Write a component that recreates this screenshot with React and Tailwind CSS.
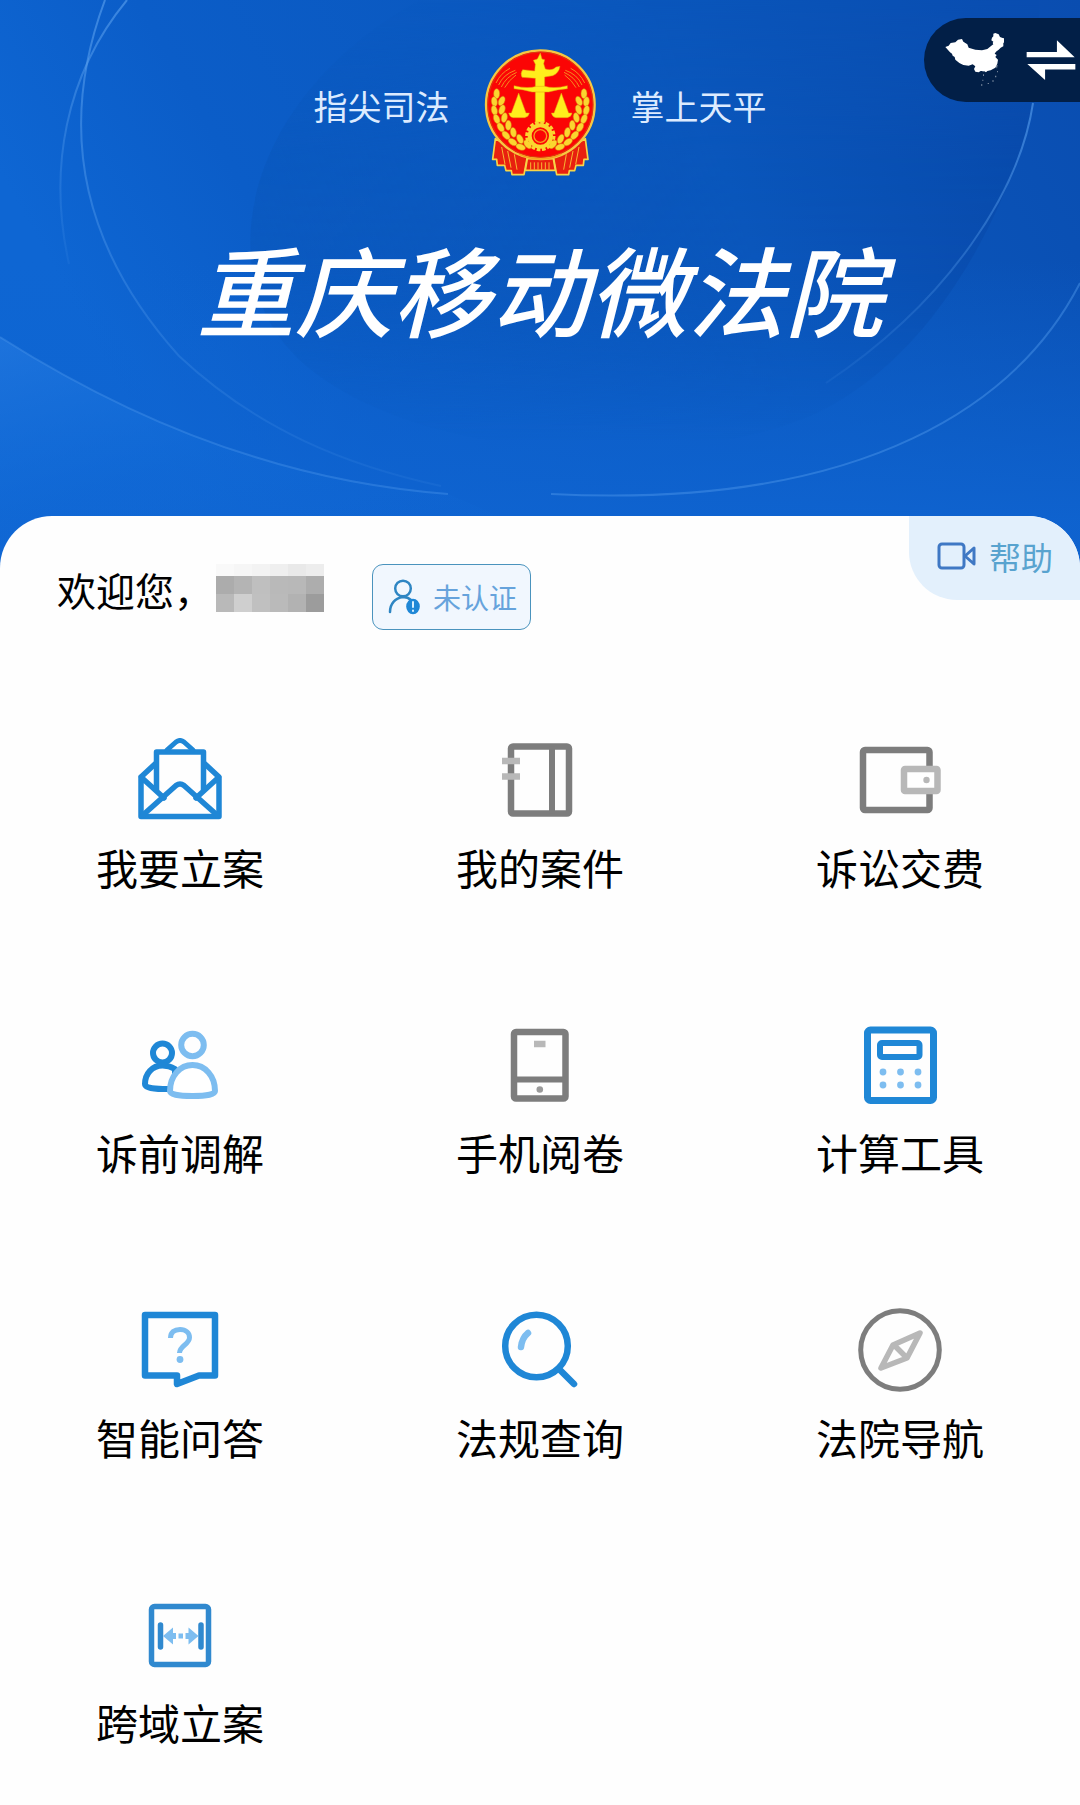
const BLUE = '#1f87d6';
const SKY = '#7dbdf0';
const GRAY = '#7d7d7d';
const SILVER = '#b8b8b8';

const icons = {
  envelope: (
    <g stroke={BLUE} strokeWidth="5.500" strokeLinejoin="round" strokeLinecap="round">
      <path d="M3 39v39.500h78V39L67 26M17 26L3 39l23 21M81 39L58 60" />
      <path d="M18.500 52V14h47v38" strokeLinecap="butt" />
      <path d="M29 12l9-8q4-3 8 0l9 8" strokeWidth="5" />
      <path d="M5 77l33-29.500q4-3 8 0L79 77" />
    </g>
  ),
  notebook: (
    <g strokeWidth="6.500" strokeLinejoin="round">
      <rect x="13" y="8.500" width="58" height="67" rx="2" stroke={GRAY} />
      <path d="M54 8.500v67" stroke={GRAY} strokeWidth="6" />
      <path d="M4 23h18M4 38.500h18" stroke={SILVER} strokeWidth="6.500" />
    </g>
  ),
  wallet: (
    <g strokeWidth="6.500">
      <rect x="5" y="12" width="66.500" height="60" rx="2" stroke={GRAY} />
      <rect x="46" y="31" width="33.500" height="22" rx="1" stroke={SILVER} fill="#fff" />
      <circle cx="68.500" cy="42" r="3.200" fill={SILVER} />
    </g>
  ),
  people: (
    <g strokeWidth="6" strokeLinejoin="round">
      <circle cx="24.500" cy="30" r="9.500" stroke={BLUE} />
      <path d="M24.500 42.500C14 42.500 7 51 7 61q0 5 18 5h12V46q-6-3.500-12.500-3.500z" stroke={BLUE} />
      <circle cx="54.500" cy="22" r="11.300" stroke={SKY} />
      <path d="M54.500 42C42 42 32 53 32 68q0 5 22.500 5T77 68C77 53 67 42 54.500 42z" stroke={SKY} fill="#fff" />
    </g>
  ),
  phone: (
    <g strokeWidth="6.500">
      <rect x="16" y="9" width="51.500" height="66.500" rx="2" stroke={GRAY} />
      <path d="M16 56.500h51" stroke={GRAY} strokeWidth="6" />
      <path d="M36 21h11.500" stroke={SILVER} />
      <circle cx="41.800" cy="66.500" r="3.300" fill="#9a9a9a" />
    </g>
  ),
  calculator: (
    <g stroke={BLUE} strokeWidth="7">
      <rect x="9.500" y="7" width="66" height="70.500" rx="3" />
      <rect x="22" y="20" width="39.500" height="14" rx="2" strokeWidth="6" />
      <g fill={SKY} stroke="none">
        <circle cx="25" cy="49" r="3.400" />
        <circle cx="42.500" cy="49" r="3.400" />
        <circle cx="60" cy="49" r="3.400" />
        <circle cx="25" cy="62" r="3.400" />
        <circle cx="42.500" cy="62" r="3.400" />
        <circle cx="60" cy="62" r="3.400" />
      </g>
    </g>
  ),
  question: (
    <g strokeLinejoin="round">
      <path d="M7 7h70v60.500H61L39 76v-8.500H7z" stroke={BLUE} strokeWidth="6.500" />
      <path d="M32.500 30c0-6 4-8.500 9.500-8.500 6 0 9.500 3.500 9.500 8 0 7-10 8-10 15.500" stroke={SKY} strokeWidth="5" />
      <circle cx="42" cy="51.500" r="3.400" fill={SKY} />
    </g>
  ),
  search: (
    <g strokeWidth="6.500" strokeLinecap="round">
      <circle cx="38.500" cy="38" r="31.300" stroke={BLUE} />
      <path d="M61 61l15 15" stroke={BLUE} />
      <path d="M23 39q1-9 7-14" stroke={SKY} />
    </g>
  ),
  compass: (
    <g strokeLinejoin="round" strokeLinecap="round">
      <circle cx="42" cy="42" r="39.300" stroke={GRAY} strokeWidth="5" />
      <path d="M62 25L35 37 23 60l26-10zM36 37l12 12" stroke={SILVER} strokeWidth="5.500" />
    </g>
  ),
  crossRegion: (
    <g>
      <rect x="13.500" y="13.500" width="57" height="58" rx="3" stroke="#3089cf" strokeWidth="5.500" />
      <path d="M22.500 32v22M63 32v22" stroke="#3089cf" strokeWidth="5.500" strokeLinecap="round" />
      <path d="M25 43l10-8.500v5.500h3v6h-3v5.500zM60.500 43l-10-8.500v5.500h-3v6h3v5.500z" fill={SKY} />
      <path d="M40.500 43h4.500" stroke={SKY} strokeWidth="5" />
    </g>
  ),
};

const services = [
  { name: '我要立案', icon: 'envelope' },
  { name: '我的案件', icon: 'notebook' },
  { name: '诉讼交费', icon: 'wallet' },
  { name: '诉前调解', icon: 'people' },
  { name: '手机阅卷', icon: 'phone' },
  { name: '计算工具', icon: 'calculator' },
  { name: '智能问答', icon: 'question' },
  { name: '法规查询', icon: 'search' },
  { name: '法院导航', icon: 'compass' },
  { name: '跨域立案', icon: 'crossRegion' },
];

// [x, y, rotation] for the ears of wheat on the left half of the emblem
const grains = [
  [110, 190, 0], [103, 214, -8], [125, 212, 25], [103, 240, -14], [126, 238, 20],
  [110, 266, -22], [133, 262, 12], [122, 291, -32], [145, 285, 2], [138, 315, -42],
  [160, 306, -10], [158, 335, -55], [180, 326, -25], [182, 350, -68], [203, 342, -40],
];

function Emblem() {
  return (
    <svg viewBox="72 50 339 390" className="h-[130px] w-[113px]" fill="none" aria-hidden="true">
      <g fill="#e8200f" stroke="#f7d548" strokeWidth="5" strokeLinejoin="round">
        <path d="M106 325l-8 62h12l2 18h22l4 16h16l2 12h36l10-54zM376 325l8 62h-12l-2 18h-22l-4 16h-16l-2 12h-36l-10-54z" />
        <path d="M202 385h78l6 35h-90z" />
      </g>
      <path
        d="M125 350l10 52M143 362l10 50M163 372l8 46M357 350l-10 52M339 362l-10 50M319 372l-8 46M212 396v22M223 396v22M234 396v22M245 396v22M256 396v22M267 396v22"
        stroke="#f7b733"
        strokeWidth="3"
      />
      <circle cx="241" cy="223" r="163" fill="#fb0505" stroke="#f5c842" strokeWidth="7" />
      <circle cx="241" cy="223" r="158" stroke="#c75a14" strokeWidth="2" />
      <g stroke="#f58a1f" strokeWidth="3">
        <path d="M108 158q14-30 42-44M116 164q14-32 50-44M124 170q14-30 46-44M134 172q12-22 34-38" />
        <path d="M374 158q-14-30-42-44M366 164q-14-32-50-44M358 170q-14-30-46-44M348 172q-12-22-34-38" />
      </g>
      {[0, 1].map(side => (
        <g key={side} transform={side ? 'translate(482 0) scale(-1 1)' : undefined} fill="#fbd62f" stroke="#d9780f" strokeWidth="1.500">
          {grains.map(([x, y, r]) => (
            <ellipse key={`${x}-${y}`} cx={x} cy={y} rx="9" ry="15" transform={`rotate(${r} ${x} ${y})`} />
          ))}
        </g>
      ))}
      <g fill="#ffee1c" stroke="#e39a10" strokeWidth="1.500">
        <path d="M241 68l5 18 8 2-3 12 5 16q22 6 32-6l12-2q-4 22-22 28l-24 4v136h-28V144l-40-3q-6-12 2-23l36 4 2-20-6-12 12-4z" />
        <path d="M162 166q40 10 68 2h24q28 8 68-2v9q-30 2-56 10h-50q-26-8-54-10z" />
        <path d="M176 188l-22 60h-8q4 14 14 14h34q12-2 14-14h-10zM304 188l-22 60h-8q4 14 14 14h34q12-2 14-14h-10z" />
      </g>
      <circle cx="241" cy="317" r="41" stroke="#fbd62f" strokeWidth="9" strokeDasharray="11 5" />
      <circle cx="241" cy="317" r="32" fill="#fb0505" stroke="#fbd62f" strokeWidth="12" />
      <circle cx="241" cy="317" r="19" stroke="#f5a21f" strokeWidth="4" />
      <path d="M178 372q63 28 126 0" stroke="#f5a21f" strokeWidth="5" />
    </svg>
  );
}

function HeaderBackground() {
  return (
    <svg viewBox="0 0 1080 580" preserveAspectRatio="none" className="absolute inset-0 h-full w-full" fill="none" aria-hidden="true">
      <defs>
        <linearGradient id="base" x1="0" y1="0.300" x2="1" y2="0">
          <stop offset="0" stopColor="#0e66d3" />
          <stop offset="0.200" stopColor="#0b5dc8" />
          <stop offset="0.600" stopColor="#0a57bd" />
          <stop offset="1" stopColor="#0a4db0" />
        </linearGradient>
        <linearGradient id="floor" x1="0" y1="0" x2="0" y2="1">
          <stop offset="0.450" stopColor="#0f64d1" stopOpacity="0" />
          <stop offset="0.900" stopColor="#0f64d1" stopOpacity="0.900" />
        </linearGradient>
        <linearGradient id="disc" x1="0" y1="0.500" x2="1" y2="0.300">
          <stop offset="0" stopColor="#0a58bd" stopOpacity="0.700" />
          <stop offset="0.600" stopColor="#0a56bb" />
          <stop offset="1" stopColor="#0849aa" />
        </linearGradient>
        <linearGradient id="discFade" x1="0" y1="0" x2="0" y2="1">
          <stop offset="0" stopColor="#fff" stopOpacity="0.100" />
          <stop offset="0.350" stopColor="#fff" stopOpacity="0.900" />
          <stop offset="0.600" stopColor="#fff" />
          <stop offset="1" stopColor="#fff" stopOpacity="0" />
        </linearGradient>
        <mask id="discMask">
          <rect width="1080" height="440" fill="url(#discFade)" />
        </mask>
        <linearGradient id="corner" x1="0" y1="0" x2="0.700" y2="0.900">
          <stop offset="0" stopColor="#2479e0" stopOpacity="0.700" />
          <stop offset="0.500" stopColor="#1470dc" stopOpacity="0.300" />
          <stop offset="1" stopColor="#1470dc" stopOpacity="0" />
        </linearGradient>
        <linearGradient id="lineLeft" x1="0" y1="0" x2="0" y2="1">
          <stop offset="0" stopColor="#5ca2ef" stopOpacity="0.600" />
          <stop offset="1" stopColor="#5ca2ef" stopOpacity="0.100" />
        </linearGradient>
      </defs>
      <rect width="1080" height="580" fill="url(#base)" />
      <rect width="1080" height="580" fill="url(#floor)" />
      <path d="M1033 103C1010 210 930 370 800 420 640 480 380 450 290 350 215 270 240 100 420 0h620z" fill="url(#disc)" mask="url(#discMask)" />
      <path d="M0 337C60 375 150 425 255 457c70 22 130 32 193 37l200 86H0z" fill="url(#corner)" />
      <g strokeWidth="2">
        <path d="M127 0C65 75 48 170 69 264" stroke="url(#lineLeft)" />
        <path d="M105 0C60 120 75 240 179 356c80 75 170 110 262 130" stroke="url(#lineLeft)" />
        <path d="M0 337C60 375 150 425 255 457c70 22 130 32 193 37" stroke="#4b97ec" strokeOpacity="0.400" />
        <path d="M1033 103C1020 190 950 300 826 383" stroke="url(#lineLeft)" />
        <path d="M1080 283C1020 400 870 510 551 494" stroke="#4f98ea" strokeOpacity="0.450" />
      </g>
    </svg>
  );
}

function RegionSwitch() {
  return (
    <button aria-label="切换地区" className="absolute top-[18px] right-0 flex h-[84px] w-[156px] items-center justify-between rounded-l-full bg-[#021f47] pr-[4px] pl-[20px]">
      <svg viewBox="132 106 178 162" className="h-[54px] w-[60px]" fill="#fff" aria-hidden="true">
        <path d="M135 148l10-4 6-8 14-2 8-8 12-2 4 8 12 8 4 10 20 6 20 2 16-4 12-10 6-4-2-4 2-4-6-4 2-8 4-4 0-8 6-2 10 4 4 8 10 4 6-2-1 12-5 4 0 10-8 4-6 6-8 6-4 6 6 4-4 6 8 8-2 12-6 12-14 8-10 2-4 4-6-4-10 0-6 4-10-2-4-8 4-8-8-6-12 4-16-2-12-6-12-10-2-8-6-4-2-6-6-4z" />
        <g opacity="0.450">
          <path d="M286 205l6-4-2 12zM246 216h6v6h-6zM248 230h3v5h-3zM246 246h3v4h-3zM242 260h4v4h-4zM262 256h4v3h-4zM276 248h4v4h-4zM284 234h4v5h-4zM290 220h3v4h-3z" />
        </g>
      </svg>
      <svg viewBox="378 120 152 124" className="h-[42px] w-[50px]" fill="#fff" aria-hidden="true">
        <path d="M380 158h92v-36l54 52H380zM528 211h-92v32l-54-49h146z" />
      </svg>
    </button>
  );
}

// blurred-out user name
const mosaic = [
  'bg-[#f9f9f9]', 'bg-[#f6f6f6]', 'bg-[#f3f3f3]', 'bg-[#efefef]', 'bg-[#e9e9e9]', 'bg-[#ededed]',
  'bg-[#acacac]', 'bg-[#b4b4b4]', 'bg-[#bfbfbf]', 'bg-[#b9b9b9]', 'bg-[#b8b8b8]', 'bg-[#adadad]',
  'bg-[#b9b9b9]', 'bg-[#cfcfcf]', 'bg-[#c0c0c0]', 'bg-[#bababa]', 'bg-[#b2b2b2]', 'bg-[#9c9c9c]',
];

export default function App() {
  return (
    <div className="relative min-h-screen bg-[#fefefe] font-['Noto_Sans_CJK_SC',sans-serif] text-black">
      <header className="relative overflow-hidden pt-[47px] pb-[221px] text-white">
        <HeaderBackground />
        <div className="relative flex items-center justify-center gap-[34px] text-[34px] leading-[48px] text-[#dcebff]">
          <span className="pb-[12px]">指尖司法</span>
          <Emblem />
          <span className="pb-[12px]">掌上天平</span>
        </div>
        <h1 className="relative mt-[38px] text-center text-[98px] leading-[144px] font-medium italic">重庆移动微法院</h1>
        <RegionSwitch />
      </header>

      <main className="relative -mt-[64px] overflow-hidden rounded-t-[52px] bg-[#fefefe] pb-[53px]">
        <button className="absolute top-0 right-0 flex h-[84px] w-[171px] items-center gap-[12px] rounded-bl-[48px] bg-[#e3f0fc] pb-[4px] pl-[28px] text-[32px] leading-[48px] text-[#58a3cf]">
          <svg viewBox="0 0 40 28" className="h-[28px] w-[40px]" fill="none" stroke="#3f78c4" strokeWidth="3" strokeLinejoin="round" aria-hidden="true">
            <rect x="2" y="2" width="25" height="24" rx="3" />
            <path d="M28 14l9-8v16z" />
          </svg>
          帮助
        </button>

        <div className="flex items-start pt-[48px] pl-[57px]">
          <p className="text-[39px] leading-[50px]">欢迎您，</p>
          <div className="ml-[3px] grid grid-cols-[repeat(6,18px)] grid-rows-[12px_18px_18px]" aria-hidden="true">
            {mosaic.map((shade, i) => (
              <span key={i} className={shade} />
            ))}
          </div>
          <button className="ml-[48px] flex h-[66px] w-[159px] items-center gap-[13px] rounded-[11px] border border-[#4a93bd] bg-[#f1f7fe] pl-[15px] text-[28px] leading-[40px] text-[#66a3dc]">
            <svg viewBox="0 0 32 36" className="h-[36px] w-[32px] shrink-0" fill="none" stroke="#2f86c3" strokeWidth="2.500" strokeLinecap="round" aria-hidden="true">
              <circle cx="15" cy="9.500" r="7.800" />
              <path d="M2 33c0-8 5-14 13-15 4 0 6 1 8 3" />
              <ellipse cx="25" cy="27.500" rx="6.800" ry="7.800" fill="#1f87d6" stroke="none" />
              <path d="M25 23v5M25 31.500v.5" stroke="#d8f0ff" strokeWidth="2" />
            </svg>
            未认证
          </button>
        </div>

        <nav className="mt-[108px] grid grid-cols-3 gap-y-[126px]">
          {services.map(service => (
            <a key={service.name} href="#" className="flex flex-col items-center gap-[15px]">
              <svg viewBox="0 0 84 84" className="h-[84px] w-[84px]" fill="none" aria-hidden="true">
                {icons[service.icon]}
              </svg>
              <span className="text-[42px] leading-[60px]">{service.name}</span>
            </a>
          ))}
        </nav>
      </main>
    </div>
  );
}
